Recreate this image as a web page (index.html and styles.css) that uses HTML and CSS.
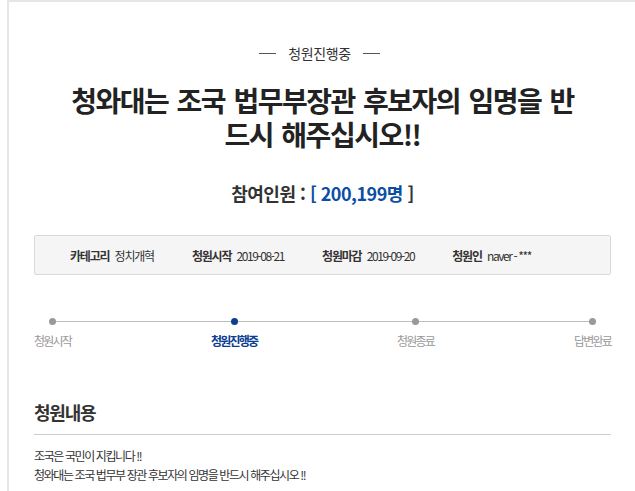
FILE: index.html
```html
<!DOCTYPE html>
<html lang="ko">
<head>
<meta charset="utf-8">
<title>청원진행중</title>
<link rel="stylesheet" href="styles.css">
</head>
<body>
<div class="card">
  <div class="status"><span class="dash"></span><span class="status-text">청원진행중</span><span class="dash"></span></div>
  <h1 class="title">청와대는 조국 법무부장관 후보자의 임명을 반드시 해주십시오!!</h1>
  <p class="count">참여인원 : <span class="blue">[ 200,199명</span> ]</p>
  <ul class="info">
    <li><b>카테고리</b> 정치개혁</li>
    <li><b>청원시작</b> <span class="num">2019-08-21</span></li>
    <li><b>청원마감</b> <span class="num">2019-09-20</span></li>
    <li><b>청원인</b> <span class="num">naver - ***</span></li>
  </ul>
  <ol class="steps">
    <li class="step"><span class="dot"></span><span class="label">청원시작</span></li>
    <li class="step active"><span class="dot"></span><span class="label">청원진행중</span></li>
    <li class="step"><span class="dot"></span><span class="label">청원종료</span></li>
    <li class="step"><span class="dot"></span><span class="label">답변완료</span></li>
  </ol>
  <h3 class="section">청원내용</h3>
  <div class="content">
    <p>조국은 국민이 지킵니다 !!</p>
    <p>청와대는 조국 법무부 장관 후보자의 임명을 반드시 해주십시오 !!</p>
  </div>
</div>
</body>
</html>
```

FILE: styles.css
```css
html, body {
  margin: 0;
  padding: 0;
  background: #fff;
  overflow: hidden;
}
body {
  font-family: "Noto Sans CJK KR", "Noto Sans", sans-serif;
  color: #333;
}
.card {
  margin-left: 7px;
  width: 577px;
  padding: 41px 25px 40px 25px;
  border-top: 2px solid #e6e6e6;
  border-left: 2px solid #e6e6e6;
  border-right: 2px solid #e6e6e6;
  background: #fff;
}
.status {
  display: flex;
  justify-content: center;
  align-items: center;
  gap: 12px;
  padding-right: 6px;
  font-size: 14px;
  line-height: 20px;
  letter-spacing: -0.4px;
  color: #333;
}
.dash {
  display: block;
  width: 17px;
  height: 1px;
  background: #555;
}
.title {
  margin: 20px auto 0;
  width: 525px;
  font-size: 28px;
  line-height: 34px;
  font-weight: 700;
  text-align: center;
  letter-spacing: -1.5px;
  word-spacing: 2px;
  word-break: break-all;
  color: #222;
}
.count {
  margin: 29px 0 0;
  text-align: center;
  font-size: 18px;
  line-height: 26px;
  font-weight: 700;
  letter-spacing: -0.5px;
  color: #333;
}
.blue {
  color: #0b4ea2;
}
.info {
  list-style: none;
  margin: 29px 0 0;
  padding: 0 0 0 35px;
  height: 38px;
  display: flex;
  align-items: center;
  gap: 38px;
  background: #f5f5f5;
  border: 1px solid #d9d9d9;
  border-radius: 2px;
  font-size: 12px;
  letter-spacing: -1.2px;
  color: #333;
}
.info b {
  font-weight: 700;
  margin-right: 3px;
}
.info .num {
  letter-spacing: -1.4px;
}
.steps {
  list-style: none;
  margin: 43px 0 0;
  padding: 0;
  display: flex;
  justify-content: space-between;
  position: relative;
}
.steps::before {
  content: "";
  position: absolute;
  left: 18px;
  right: 18px;
  top: 3px;
  height: 1px;
  background: #bdbdbd;
}
.step {
  display: flex;
  flex-direction: column;
  align-items: center;
  gap: 7px;
  position: relative;
}
.dot {
  display: block;
  width: 7px;
  height: 7px;
  border-radius: 50%;
  background: #999;
}
.label {
  font-size: 12px;
  line-height: 18px;
  letter-spacing: -1.8px;
  color: #999;
}
.step.active .dot {
  background: #0b3d91;
}
.step.active .label {
  color: #0b3d91;
  font-weight: 700;
}
.section {
  margin: 50px 0 0;
  padding-bottom: 10px;
  border-bottom: 1px solid #cccccc;
  font-size: 18px;
  line-height: 24px;
  font-weight: 700;
  letter-spacing: -1.2px;
  color: #333;
}
.content {
  margin-top: 11px;
  font-size: 12px;
  line-height: 19px;
  letter-spacing: -1.4px;
  color: #333;
}
.content p {
  margin: 0;
}
```
